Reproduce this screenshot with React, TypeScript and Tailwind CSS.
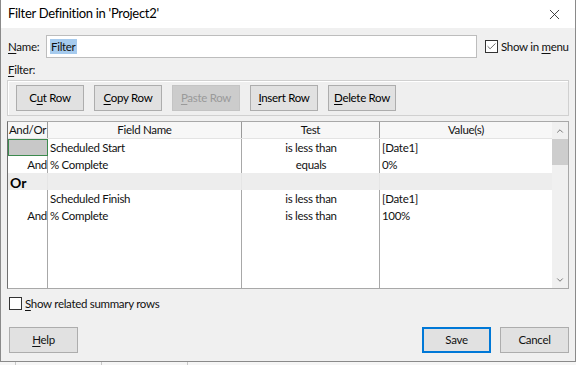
import { X, ChevronUp, ChevronDown, Check } from "lucide-react";

const FONT = "font-['Lato','Liberation_Sans',sans-serif]";

function Mn({ pre, key_, post }: { pre?: string; key_: string; post?: string }) {
  return (
    <>
      {pre}
      <span className="underline underline-offset-2">{key_}</span>
      {post}
    </>
  );
}

function ToolButton({ children, disabled }: { children: React.ReactNode; disabled?: boolean }) {
  return (
    <button
      className={
        disabled
          ? "h-[26px] w-[68px] border border-[#c4c4c4] bg-[#cccccc] text-[11.5px] tracking-[-0.3px] text-[#9a9a9a]"
          : "h-[26px] w-[68px] border border-[#adadad] bg-[#e1e1e1] text-[11.5px] tracking-[-0.3px] text-black"
      }
    >
      {children}
    </button>
  );
}

const ROWS = [
  { andor: "", field: "Scheduled Start", test: "is less than", value: "[Date1]", selected: true },
  { andor: "And", field: "% Complete", test: "equals", value: "0%" },
  { group: "Or" },
  { andor: "", field: "Scheduled Finish", test: "is less than", value: "[Date1]" },
  { andor: "And", field: "% Complete", test: "is less than", value: "100%" },
];

export default function App() {
  return (
    <div className={`${FONT} h-[365px] w-[576px] overflow-hidden bg-[#f6f6f6] text-[11.5px] tracking-[-0.3px] text-[#111]`}>
      <div className="flex h-[362px] flex-col border-x border-b border-[#8a8a8a] bg-[#f0f0f0]">
        {/* Title bar */}
        <div className="flex h-[28px] shrink-0 items-center justify-between bg-white pl-[7px] pr-[12px]">
          <span className="text-[13px] tracking-[-0.3px] text-black">Filter Definition in 'Project2'</span>
          <X size={17} strokeWidth={1.2} className="text-[#222]" />
        </div>

        <div className="flex flex-1 flex-col px-[6px]">
          {/* Name row */}
          <div className="mt-[7px] flex h-[23px] items-center">
            <span className="w-[39px] shrink-0 pl-[1px]">
              <Mn key_="N" post="ame:" />
            </span>
            <div className="flex h-[23px] w-[431px] shrink-0 items-center border border-[#bdbdbd] bg-white pl-[3px]">
              <span className="bg-[#a6cbee] px-[1px] leading-[15px]">Filter</span>
            </div>
            <div className="ml-[8px] flex shrink-0 items-center gap-[3px] whitespace-nowrap">
              <div className="flex h-[13px] w-[13px] items-center justify-center border border-[#333] bg-white">
                <Check size={11} strokeWidth={1.6} className="text-[#333]" />
              </div>
              <span>
                Show in <Mn key_="m" post="enu" />
              </span>
            </div>
          </div>

          <div className="mt-[4px] h-[16px] pl-[1px] leading-[16px]">
            <Mn key_="F" post="ilter:" />
          </div>

          {/* Button group */}
          <div className="mt-[2px] flex h-[36px] items-center gap-[10px] border border-[#d0d0d0] bg-[#efefef] px-[8px] shadow-[inset_1px_1px_0_#ffffff]">
            <ToolButton>
              <Mn pre="C" key_="u" post="t Row" />
            </ToolButton>
            <ToolButton>
              <Mn key_="C" post="opy Row" />
            </ToolButton>
            <ToolButton disabled>
              <Mn key_="P" post="aste Row" />
            </ToolButton>
            <ToolButton>
              <Mn key_="I" post="nsert Row" />
            </ToolButton>
            <ToolButton>
              <Mn key_="D" post="elete Row" />
            </ToolButton>
          </div>

          {/* Grid */}
          <div className="mt-[5px] flex h-[168px] w-[562px] border border-[#a8a8a8] border-l-[#6e6e6e] bg-white">
            <div className="flex flex-1 flex-col">
              <div className="grid h-[17px] grid-cols-[40px_194px_138px_1fr] border-b border-[#e3e3e3] bg-[#f7f7f7] leading-[16px]">
                <div className="border-r border-[#9a9a9a] text-center">And/Or</div>
                <div className="border-r border-[#9a9a9a] text-center">Field Name</div>
                <div className="border-r border-[#9a9a9a] text-center">Test</div>
                <div className="text-center">Value(s)</div>
              </div>
              <div className="relative flex-1">
                <div className="absolute inset-0 grid grid-cols-[40px_194px_138px_1fr]">
                  <div className="border-r border-[#a8a8a8]" />
                  <div className="border-r border-[#a8a8a8]" />
                  <div className="border-r border-[#a8a8a8]" />
                  <div />
                </div>
                <div className="relative">
                  {ROWS.map((r, i) =>
                    r.group ? (
                      <div key={i} className="h-[17px] bg-[#ebebeb]/90 pl-[2px] text-[14px] font-bold leading-[19px] tracking-normal text-black">
                        {r.group}
                      </div>
                    ) : (
                      <div key={i} className="grid h-[17px] grid-cols-[40px_194px_138px_1fr] leading-[17px]">
                        <div
                          className={
                            r.selected
                              ? "border border-[#3c8a4e] bg-[#c8c8c8]"
                              : "pr-[1px] text-right"
                          }
                        >
                          {r.andor}
                        </div>
                        <div className="pl-[2px]">{r.field}</div>
                        <div className="text-center">{r.test}</div>
                        <div className="pl-[2px]">{r.value}</div>
                      </div>
                    )
                  )}
                </div>
              </div>
            </div>
            {/* Scrollbar */}
            <div className="flex w-[16px] flex-col items-center bg-[#f0f0f0]">
              <div className="flex h-[17px] items-center justify-center">
                <ChevronUp size={10} strokeWidth={2} className="text-[#606060]" />
              </div>
              <div className="h-[26px] w-full bg-[#cdcdcd]" />
              <div className="flex-1" />
              <div className="flex h-[17px] items-center justify-center">
                <ChevronDown size={10} strokeWidth={2} className="text-[#606060]" />
              </div>
            </div>
          </div>

          {/* Related summary rows */}
          <div className="mt-[8px] flex h-[13px] items-center gap-[3px] pl-[2px]">
            <div className="h-[13px] w-[13px] border border-[#333] bg-white" />
            <span>
              <Mn key_="S" post="how related summary rows" />
            </span>
          </div>

          {/* Bottom buttons */}
          <div className="mt-[17px] flex items-center pl-[2px]">
            <button className="h-[26px] w-[69px] border border-[#adadad] bg-[#e1e1e1]">
              <Mn key_="H" post="elp" />
            </button>
            <div className="flex-1" />
            <button className="h-[26px] w-[69px] border border-[#0078d7] bg-[#e1e1e1] shadow-[inset_0_0_0_1px_#0078d7]">
              Save
            </button>
            <button className="ml-[9px] h-[26px] w-[69px] border border-[#adadad] bg-[#e1e1e1]">
              Cancel
            </button>
          </div>
        </div>
      </div>
      <div className="flex h-[3px]">
        <div className="w-[16px] border-r border-[#c8c8c8]" />
        <div className="w-[86px] border-r border-[#c8c8c8]" />
        <div className="w-[86px] border-r border-[#c8c8c8]" />
      </div>
    </div>
  );
}
